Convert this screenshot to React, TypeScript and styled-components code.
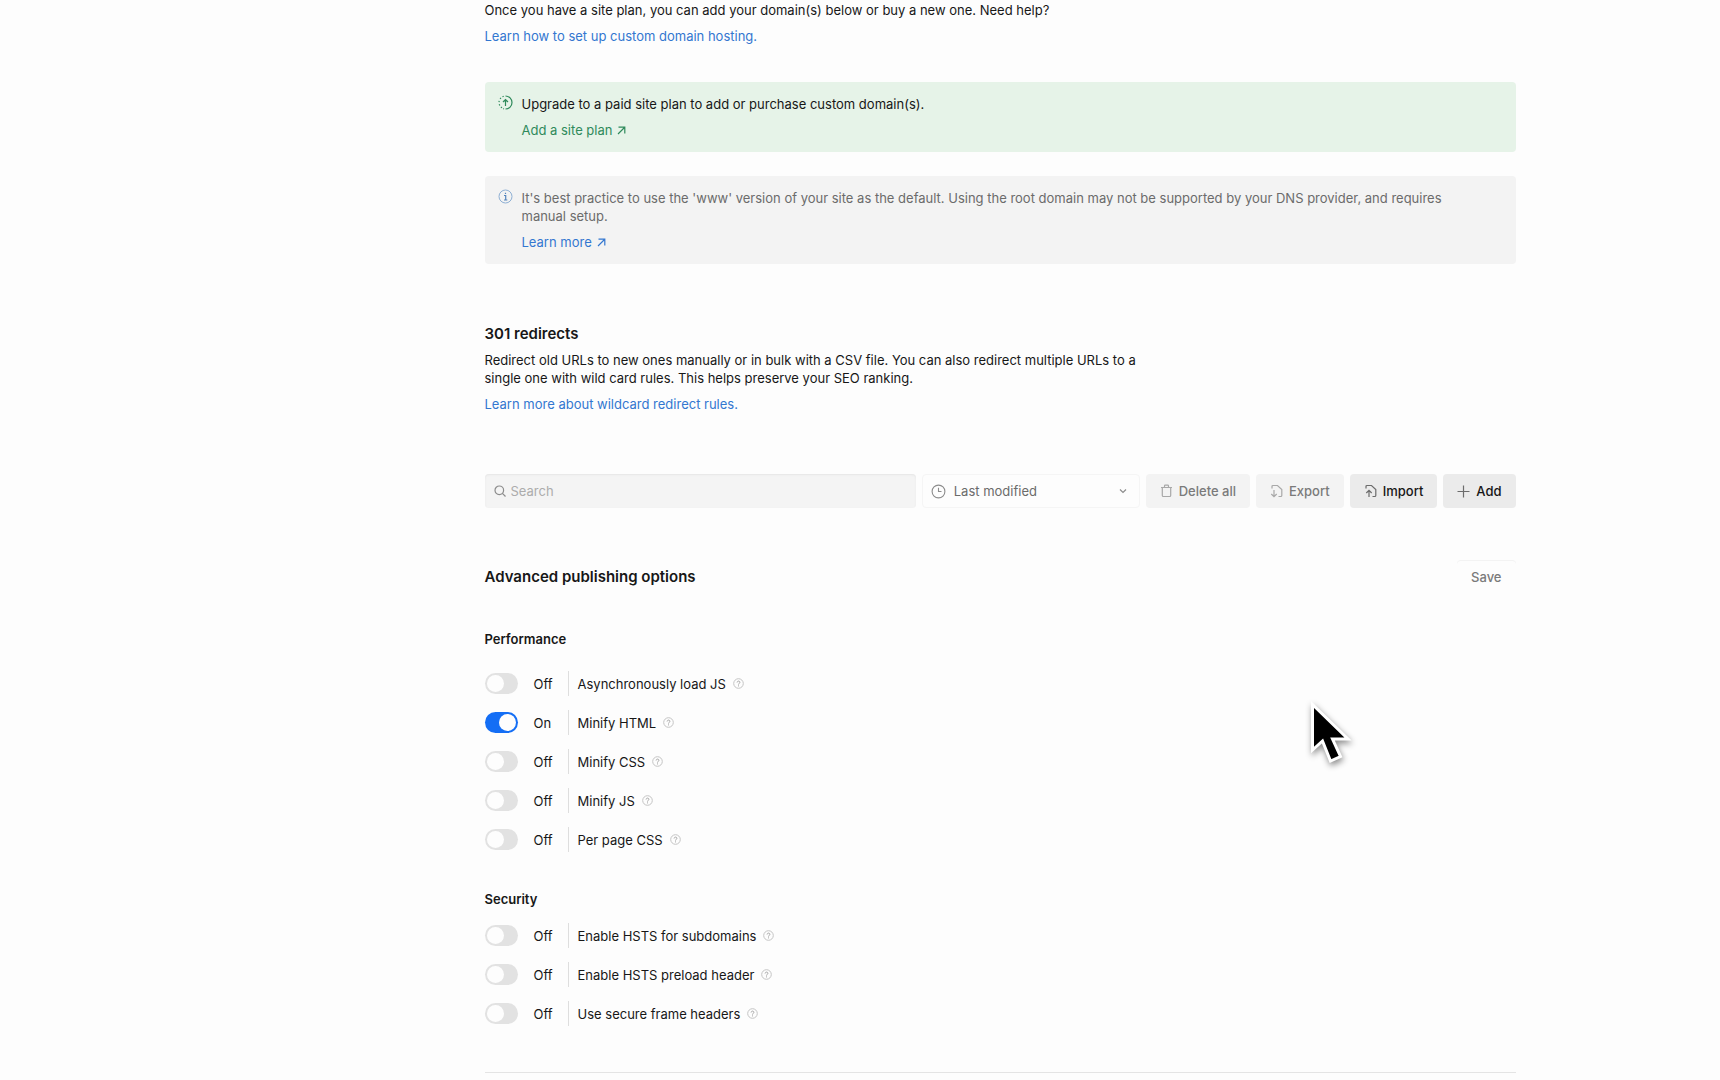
import React, { useState } from "react";
import styled, { createGlobalStyle } from "styled-components";

const GlobalStyle = createGlobalStyle`
  * { box-sizing: border-box; }
  body {
    margin: 0;
    background: #fdfdfd;
    color: #171717;
    font: 400 13px/18px Inter, "Liberation Sans", sans-serif;
  }
  button, input, select { font: inherit; color: inherit; }
  p, h2, h3 { margin: 0; }
`;

const Page = styled.div`
  min-height: 100vh;
  padding: 1px 24px 0 304px;
`;

const Main = styled.main`
  max-width: 1031px;
  margin: 0 auto;
`;

const Stack = styled.div`
  display: flex;
  flex-direction: column;
  align-items: flex-start;
  gap: 8px;
`;

const Link = styled.a<{ $tone?: "green" }>`
  display: inline-flex;
  align-items: center;
  gap: 5px;
  color: ${(p) => (p.$tone === "green" ? "#2f8a5b" : "#3377d0")};
  text-decoration: none;
`;

const Notices = styled.div`
  display: grid;
  gap: 24px;
  margin-top: 37px;
`;

const Notice = styled.section<{ $tone: "green" | "gray" }>`
  display: flex;
  gap: 9px;
  padding: 13px 48px 13px 13px;
  border-radius: 4px;
  background: ${(p) => (p.$tone === "green" ? "#e6f3e8" : "#f3f3f3")};
  color: ${(p) => (p.$tone === "green" ? "#171717" : "#6b6b6b")};
  > svg { flex: none; }
`;

const Redirects = styled.section`
  margin-top: 60px;
`;

const Title = styled.h2`
  font-size: 15px;
  line-height: 20px;
  font-weight: 600;
`;

const Intro = styled(Stack)`
  max-width: 672px;
  margin-top: 7px;
`;

const Toolbar = styled.div`
  display: flex;
  gap: 6px;
  height: 34px;
  margin-top: 61px;
`;

const SearchBox = styled.label`
  flex: 1;
  min-width: 0;
  display: flex;
  align-items: center;
  gap: 5px;
  padding: 0 9px;
  border-radius: 4px;
  background: #f4f4f4;
  box-shadow: inset 0 1px 2px #e6e6e6;
  color: #8c8c8c;
  input {
    flex: 1;
    min-width: 0;
    padding: 0;
    border: 0;
    outline: 0;
    background: none;
  }
  input::placeholder { color: #acacac; opacity: 1; }
`;

const SortBox = styled.label`
  width: 218px;
  display: flex;
  align-items: center;
  gap: 8px;
  padding: 0 12px 0 8px;
  border: 1px solid #f5f5f5;
  border-radius: 4px;
  color: #8c8c8c;
  select {
    flex: 1;
    min-width: 0;
    padding: 0;
    border: 0;
    appearance: none;
    background: none;
    color: #6b6b6b;
  }
`;

const Button = styled.button<{ $plain?: boolean }>`
  display: inline-flex;
  align-items: center;
  gap: 6px;
  height: 34px;
  padding: 0 14px;
  border: 0;
  border-radius: 4px;
  background: ${(p) => (p.$plain ? "none" : "#ebebeb")};
  font-weight: 500;
  svg { color: #6c6c6c; }
  &:disabled {
    background: ${(p) => (p.$plain ? "none" : "#f3f3f3")};
    box-shadow: ${(p) => (p.$plain ? "inset 0 1px #f3f3f3" : "none")};
    color: #7a7a7a;
  }
  &:disabled svg { color: #a8a8a8; }
`;

const Options = styled.section`
  margin-top: 52px;
  padding-bottom: 46px;
  border-bottom: 1px solid #e4e4e4;
`;

const OptionsHead = styled.div`
  display: flex;
  align-items: center;
  justify-content: space-between;
  margin-bottom: 36px;
`;

const GroupTitle = styled.h3`
  font-size: 13px;
  line-height: 18px;
  font-weight: 600;
`;

const Group = styled.div<{ $gap: number }>`
  display: grid;
  gap: ${(p) => p.$gap}px;
  & + & { margin-top: 38px; }
`;

const Rows = styled.div`
  display: grid;
  gap: 14px;
`;

const Row = styled.div`
  display: flex;
  align-items: center;
  height: 25px;
`;

const Switch = styled.input`
  display: flex;
  align-items: center;
  appearance: none;
  width: 33px;
  height: 21px;
  margin: 0;
  padding: 2px;
  border-radius: 11px;
  background: #e2e2e2;
  &::before {
    content: "";
    width: 17px;
    height: 17px;
    border-radius: 50%;
    background: #fdfdfd;
  }
  &:checked { background: #146ef5; justify-content: flex-end; }
`;

const State = styled.span`
  width: 34px;
  margin-left: 16px;
`;

const RowLabel = styled.label`
  display: flex;
  align-items: center;
  height: 25px;
  padding-left: 9px;
  border-left: 1px solid #dedede;
`;

const Help = styled.button`
  display: flex;
  margin-left: 7px;
  padding: 0;
  border: 0;
  background: none;
  color: #a6a6a6;
`;

const Pointer = styled.svg`
  position: fixed;
  left: 1306px;
  top: 696px;
  pointer-events: none;
  filter: drop-shadow(1px 3px 3px rgba(0, 0, 0, 0.45));
`;

const line = { fill: "none", stroke: "currentColor", strokeWidth: 1.2 } as const;

const Arrow = () => (
  <svg width="9" height="9" viewBox="0 0 9 9" {...line}>
    <path d="M1 8L7.5 1.5M1.5 1.2H7.8V7.5" />
  </svg>
);
const UpgradeIcon = () => (
  <svg width="15" height="15" viewBox="0 0 15 15" {...line} stroke="#2f8a5b">
    <path d="M7.5 1A6.5 6.5 0 0 1 7.5 14M5.7 1.3L4.5 1.8M2.9 2.9L2.1 3.9M1.2 5.8L1 7.2M1.2 9.2L1.8 10.5M2.9 12L4 12.9M5.3 13.6L6 13.8M7.5 11V4.7M5 7L7.5 4.5L10 7" />
  </svg>
);
const InfoIcon = () => (
  <svg width="15" height="15" viewBox="0 0 15 15" {...line} stroke="#8fb0d4">
    <circle cx="7.5" cy="7.5" r="6.5" strokeWidth="1" />
    <path d="M6 6.5H7.7V11M6 11H9.3M7.5 3.7V5" stroke="#5585bd" />
  </svg>
);
const SearchIcon = () => (
  <svg width="12" height="12" viewBox="0 0 12 12" {...line}>
    <circle cx="5.3" cy="5.3" r="4.3" />
    <path d="M8.4 8.4L11.5 11.5" />
  </svg>
);
const ClockIcon = () => (
  <svg width="15" height="15" viewBox="0 0 15 15" {...line} strokeWidth="1.1">
    <circle cx="7.5" cy="7.5" r="6.4" />
    <path d="M7.5 3.8V7.5H10.5" />
  </svg>
);
const ChevronIcon = () => (
  <svg width="8" height="8" viewBox="0 0 8 8" {...line}>
    <path d="M1 2.5L4 5.5L7 2.5" />
  </svg>
);
const TrashIcon = () => (
  <svg width="13" height="14" viewBox="0 0 13 14" {...line} strokeWidth="1.2">
    <path d="M1 3.5H12M4.5 3.5V2Q4.5 1.2 5.3 1.2H7.7Q8.5 1.2 8.5 2V3.500M2.300 3.500V11.500Q2.300 12.500 3.300 12.500H9.700Q10.700 12.500 10.700 11.500V3.500" />
  </svg>
);
const FileIcon = ({ up }: { up?: boolean }) => (
  <svg width="13" height="14" viewBox="0 0 13 14" {...line}>
    <path d="M2 4.5V2.500Q2 1.500 3 1.500H7.500L11.800 5.500V11.500Q11.800 12.500 10.800 12.500H8.500" />
    <path d={up ? "M5 13V6.500M2.300 9L5 6.300L7.700 9" : "M4 6V12.500M1.300 10L4 12.700L6.700 10"} />
  </svg>
);
const PlusIcon = () => (
  <svg width="13" height="13" viewBox="0 0 13 13" {...line}>
    <path d="M6.5 .5V12.5M.5 6.5H12.5" />
  </svg>
);
const HelpIcon = () => (
  <svg width="11" height="11" viewBox="0 0 11 11" {...line} strokeWidth="1">
    <circle cx="5.5" cy="5.5" r="4.8" stroke="#c4c4c4" />
    <path d="M4.1 4.5C4.1 2.6 7 2.7 6.9 4.4C6.9 5.3 5.5 5.3 5.5 6.6M5.5 7.4V8.4" />
  </svg>
);

const initial = [
  {
    title: "Performance",
    gap: 23,
    items: [
      ["Asynchronously load JS", false],
      ["Minify HTML", true],
      ["Minify CSS", false],
      ["Minify JS", false],
      ["Per page CSS", false],
    ],
  },
  {
    title: "Security",
    gap: 15,
    items: [
      ["Enable HSTS for subdomains", false],
      ["Enable HSTS preload header", false],
      ["Use secure frame headers", false],
    ],
  },
] as { title: string; gap: number; items: [string, boolean][] }[];

function OptionRow({ name, value }: { name: string; value: boolean }) {
  const [on, setOn] = useState(value);
  const id = name.toLowerCase().replace(/ /g, "-");
  return (
    <Row>
      <Switch id={id} type="checkbox" role="switch" checked={on} onChange={() => setOn(!on)} />
      <State>{on ? "On" : "Off"}</State>
      <RowLabel htmlFor={id}>{name}</RowLabel>
      <Help type="button" aria-label={`About ${name}`}><HelpIcon /></Help>
    </Row>
  );
}

export default function App() {
  return (
    <Page>
      <GlobalStyle />
      <Main>
        <Stack>
          <p>Once you have a site plan, you can add your domain(s) below or buy a new one. Need help?</p>
          <Link href="#hosting">Learn how to set up custom domain hosting.</Link>
        </Stack>

        <Notices>
          <Notice $tone="green">
            <UpgradeIcon />
            <Stack>
              <p>Upgrade to a paid site plan to add or purchase custom domain(s).</p>
              <Link href="#plans" $tone="green">Add a site plan <Arrow /></Link>
            </Stack>
          </Notice>
          <Notice $tone="gray">
            <InfoIcon />
            <Stack>
              <p>
                It's best practice to use the 'www' version of your site as the default. Using the root
                domain may not be supported by your DNS provider, and requires manual setup.
              </p>
              <Link href="#www">Learn more <Arrow /></Link>
            </Stack>
          </Notice>
        </Notices>

        <Redirects>
          <Title>301 redirects</Title>
          <Intro>
            <p>
              Redirect old URLs to new ones manually or in bulk with a CSV file. You can also redirect
              multiple URLs to a single one with wild card rules. This helps preserve your SEO ranking.
            </p>
            <Link href="#wildcard">Learn more about wildcard redirect rules.</Link>
          </Intro>
          <Toolbar>
            <SearchBox>
              <SearchIcon />
              <input type="text" placeholder="Search" aria-label="Search redirects" />
            </SearchBox>
            <SortBox>
              <ClockIcon />
              <select aria-label="Sort redirects"><option>Last modified</option></select>
              <ChevronIcon />
            </SortBox>
            <Button type="button" disabled><TrashIcon />Delete all</Button>
            <Button type="button" disabled><FileIcon />Export</Button>
            <Button type="button"><FileIcon up />Import</Button>
            <Button type="button"><PlusIcon />Add</Button>
          </Toolbar>
        </Redirects>

        <Options>
          <OptionsHead>
            <Title>Advanced publishing options</Title>
            <Button type="button" $plain disabled>Save</Button>
          </OptionsHead>
          {initial.map((group) => (
            <Group key={group.title} $gap={group.gap}>
              <GroupTitle>{group.title}</GroupTitle>
              <Rows>
                {group.items.map(([name, value]) => <OptionRow key={name} name={name} value={value} />)}
              </Rows>
            </Group>
          ))}
        </Options>
      </Main>
      <Pointer width="52" height="76" viewBox="0 0 52 76" aria-hidden="true">
        <path d="M6.5 8.5V54L16.5 45L24.5 65L34.5 60.5L26.5 43H42Z" fill="#000" stroke="#fff" strokeWidth="3" />
      </Pointer>
    </Page>
  );
}
